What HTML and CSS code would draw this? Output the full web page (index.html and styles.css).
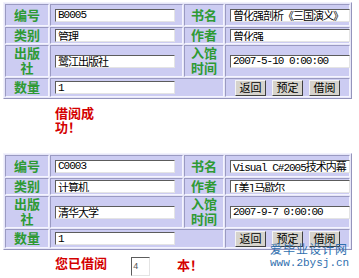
FILE: index.html
```html
<!DOCTYPE html>
<html>
<head>
	<meta charset="UTF-8">
	<title>图书借阅</title>
	<link rel="stylesheet" href="styles.css">
</head>

<body>
<div id="wrapper">

	<table class="book">
		<colgroup>
			<col class="cLbl"><col class="cVal"><col class="cLbl2"><col class="cVal2">
		</colgroup>
		<tr class="r1">
			<td class="lbl">编号</td>
			<td><input class="txt" type="text" value="B0005"/></td>
			<td class="lbl">书名</td>
			<td><input class="txt" type="text" value="曾化强剖析《三国演义》"/></td>
		</tr>
		<tr class="r2">
			<td class="lbl">类别</td>
			<td><input class="txt" type="text" value="管理"/></td>
			<td class="lbl">作者</td>
			<td><input class="txt" type="text" value="曾化强"/></td>
		</tr>
		<tr class="r3">
			<td class="lbl">出版<br>社</td>
			<td><input class="txt" type="text" value="鹭江出版社"/></td>
			<td class="lbl">入馆<br>时间</td>
			<td><input class="txt" type="text" value="2007-5-10 0:00:00"/></td>
		</tr>
		<tr class="r4">
			<td class="lbl">数量</td>
			<td colspan="2"><input class="txt" type="text" value="1"/></td>
			<td class="btns">
				<input class="btn" type="button" value="返回"/>
				<input class="btn" type="button" value="预定"/>
				<input class="btn" type="button" value="借阅"/>
			</td>
		</tr>
	</table>

	<div class="okMsg">借阅成功！</div>

	<table class="book">
		<colgroup>
			<col class="cLbl"><col class="cVal"><col class="cLbl2"><col class="cVal2">
		</colgroup>
		<tr class="r1">
			<td class="lbl">编号</td>
			<td><input class="txt" type="text" value="C0003"/></td>
			<td class="lbl">书名</td>
			<td><input class="txt" type="text" value="Visual C#2005技术内幕"/></td>
		</tr>
		<tr class="r2">
			<td class="lbl">类别</td>
			<td><input class="txt" type="text" value="计算机"/></td>
			<td class="lbl">作者</td>
			<td><input class="txt" type="text" value="[美]马歇尔"/></td>
		</tr>
		<tr class="r3">
			<td class="lbl">出版<br>社</td>
			<td><input class="txt" type="text" value="清华大学"/></td>
			<td class="lbl">入馆<br>时间</td>
			<td><input class="txt" type="text" value="2007-9-7 0:00:00"/></td>
		</tr>
		<tr class="r4">
			<td class="lbl">数量</td>
			<td colspan="2"><input class="txt" type="text" value="1"/></td>
			<td class="btns">
				<input class="btn" type="button" value="返回"/>
				<input class="btn" type="button" value="预定"/>
				<input class="btn" type="button" value="借阅"/>
			</td>
		</tr>
	</table>

	<div class="countRow">
		<span class="red">您已借阅</span>
		<input class="cnt" type="text" value="4" readonly/>
		<span class="red ben">本！</span>
	</div>

	<div class="mark">
		<div class="markCn">爱毕业设计网</div>
		<div class="markEn">www.2bysj.cn</div>
	</div>

</div>
</body>

</html>
```

FILE: styles.css
```css
body{
	margin:0;
	background:#fff;
	font-family:"Liberation Sans", "Noto Sans CJK SC", sans-serif;
}

#wrapper{
	position:relative;
	width:359px;
	height:278px;
	padding:2px 0 0 3px;
	box-sizing:border-box;
}

.book{
	width:349px;
	table-layout:fixed;
	border-collapse:separate;
	border-spacing:1px;
	background:#e6e6f8;
	border:1px solid;
	border-color:#f2f2fc #9494bc #9494bc #f2f2fc;
}
.cLbl{ width:44px; }
.cVal{ width:133px; }
.cLbl2{ width:40px; }

.book td{
	background:#ccccf2;
	border:1px solid;
	border-color:#9a9ac2 #f4f4fe #f4f4fe #9a9ac2;
	padding:0 0 0 4px;
	vertical-align:middle;
}
.r1 td{ height:20px; }
.r2 td{ height:15px; }
.r3 td{ height:30px; }
.r4 td{ height:17px; }

.lbl{
	color:#2e9a34;
	font-weight:bold;
	font-size:13px;
	line-height:15px;
	text-align:center;
	padding:0 !important;
}

.txt{
	display:block;
	width:120px;
	height:13px;
	box-sizing:border-box;
	margin:0;
	padding:0 2px;
	border:1px solid;
	border-color:#5c5c5c #e4e4e4 #e4e4e4 #5c5c5c;
	background:#fff;
	font-family:"Liberation Mono", "Noto Sans CJK SC", monospace;
	font-size:11px;
	letter-spacing:-1px;
	line-height:11px;
	color:#000;
}

.btns{
	text-align:center;
	padding:0 !important;
	font-size:0;
}
.btn{
	width:31px;
	height:16px;
	margin:0 3px;
	padding:0;
	border:1px solid;
	border-color:#f4f4f4 #404040 #404040 #f4f4f4;
	background:#d6d3cc;
	font-family:"Liberation Sans", "Noto Sans CJK SC", sans-serif;
	font-size:11px;
	line-height:14px;
	color:#000;
}

.okMsg{
	width:40px;
	margin:8px 0 18px 52px;
	color:#d40000;
	font-weight:bold;
	font-size:13px;
	line-height:14px;
}

.countRow{
	display:flex;
	align-items:flex-start;
	margin:7px 0 0 52px;
}
.red{
	color:#d40000;
	font-weight:bold;
	font-size:13px;
	line-height:14px;
}
.ben{
	margin-top:2px;
}
.cnt{
	width:19px;
	height:19px;
	box-sizing:border-box;
	margin:0 27px 0 24px;
	padding:0 1px;
	border:1px solid;
	border-color:#5c5c5c #e4e4e4 #e4e4e4 #5c5c5c;
	font-family:"Liberation Mono", monospace;
	font-size:9px;
	line-height:9px;
	color:#555;
}

.mark{
	position:absolute;
	left:270px;
	top:244px;
	color:#2f6fae;
}
.markCn{
	font-size:12px;
	line-height:13px;
	letter-spacing:1px;
}
.markEn{
	font-family:"Liberation Mono", monospace;
	font-size:11px;
	line-height:12px;
}
```
